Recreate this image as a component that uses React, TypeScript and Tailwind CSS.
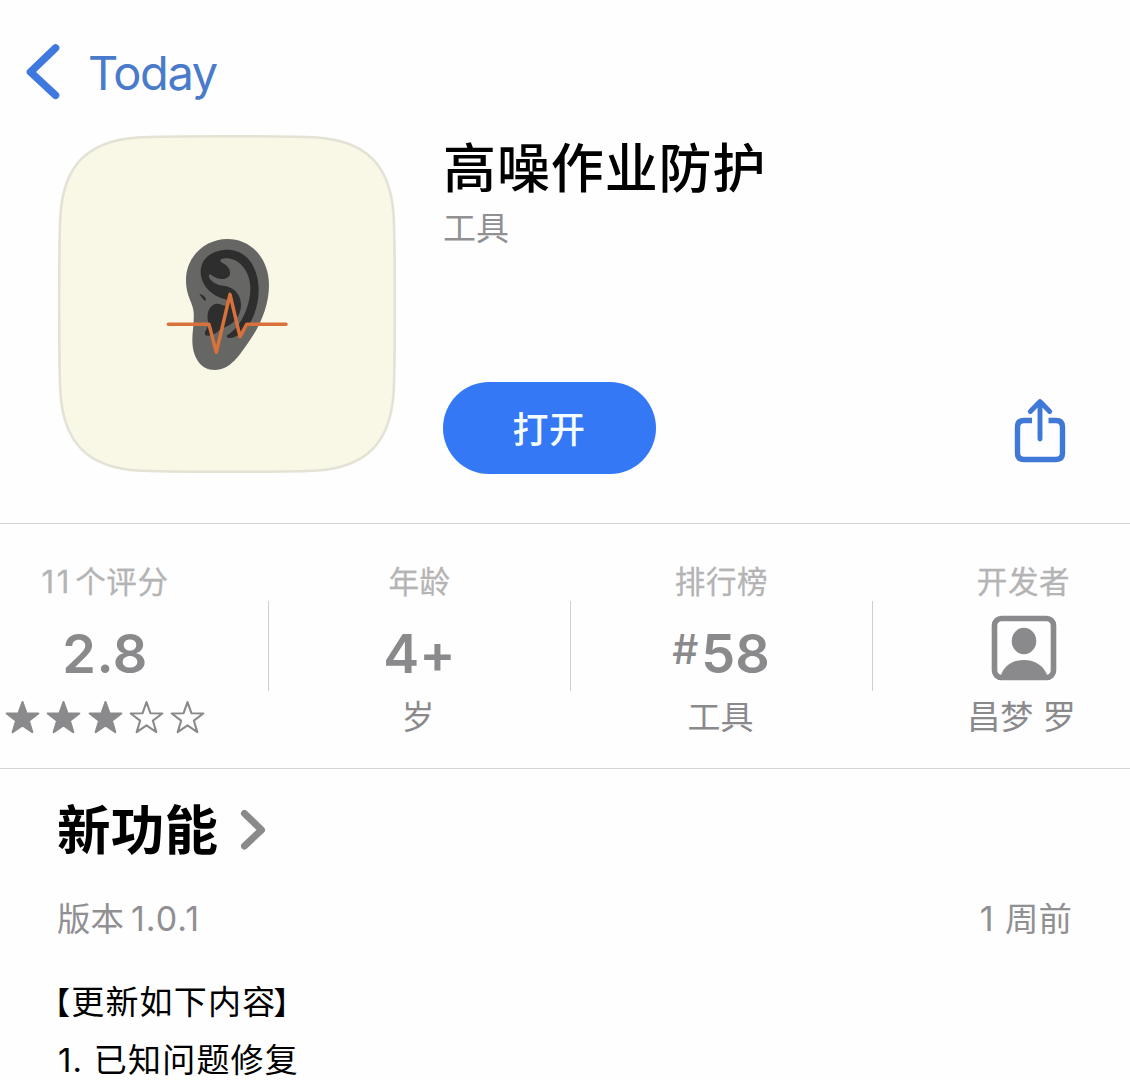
import React from "react";

const GRAY = "#8a8a8d";

function BackChevron() {
  return (
    <svg width="36" height="56" viewBox="0 0 36 56" fill="none" className="shrink-0">
      <path d="M30.500 4 L5.500 28 L30.500 51.300" stroke="#3f78de" strokeWidth="7.600" strokeLinecap="round" strokeLinejoin="round" />
    </svg>
  );
}

function AppIcon() {
  return (
    <svg width="340" height="340" viewBox="0 0 340 340" fill="none" className="shrink-0">
      <path
        d="M80 3.500 C104 1.800 236 1.800 260 3.500 C309 7 333 31 336.500 80 C338.200 104 338.200 236 336.500 260 C333 309 309 333 260 336.500 C236 338.200 104 338.200 80 336.500 C31 333 7 309 3.500 260 C1.800 236 1.800 104 3.500 80 C7 31 31 7 80 3.500Z"
        fill="#f9f7e6"
        stroke="#e3e2d5"
        strokeWidth="2.6"
      />
      <g transform="translate(93 91) scale(.33333)">
        <path d="M232 42 C305 42 357 102 357 180 C357 240 332 300 300 345 C268 392 240 435 195 435 C150 435 127 395 127 345 C127 318 133 295 131 262 C129 232 108 215 108 165 C108 95 165 42 232 42Z" fill="#666664" />
        <path
          d="M232 74 C292 74 326 130 326 195 C326 260 292 332 240 339 C228 341 228 331 236 328 C276 302 301 240 301 190 C301 142 272 103 232 100 C214 99 206 106 214 112 C230 119 242 132 240 147 C236 165 205 168 184 150 C178 146 174 151 178 158 C186 173 203 180 221 182 C254 186 273 210 273 240 C273 276 248 299 220 309 C204 316 190 338 166 331 C160 318 178 308 175 293 C168 268 176 240 200 236 C216 236 222 246 232 240 C240 236 236 228 227 223 C190 214 152 184 152 140 C152 100 188 74 232 74Z"
          fill="#2d2e2d"
        />
        <path d="M148 207 C158 208 168 216 168 226 C163 229 156 219 148 207Z" fill="#2d2e2d" />
        <path d="M55 298 H177 L199 382 L240 208 L270 335 L290 298 H408" stroke="#d9713c" strokeWidth="10.500" strokeLinecap="round" strokeLinejoin="round" />
      </g>
    </svg>
  );
}

function ShareIcon() {
  return (
    <svg width="54" height="66" viewBox="0 0 54 66" fill="none" stroke="#3f78d6" strokeWidth="5.400">
      <path d="M19 22.500 H11 Q4.500 22.500 4.500 29 V55 Q4.500 61.500 11 61.500 H43 Q49.500 61.500 49.500 55 V29 Q49.500 22.500 43 22.500 H35.500" />
      <path d="M27 41 V4 M17.300 13.500 L27 3.500 L36.700 13.500" strokeWidth="4.900" strokeLinecap="round" strokeLinejoin="round" />
    </svg>
  );
}

function Star({ filled }: { filled: boolean }) {
  return (
    <svg width="35" height="35" viewBox="0 0 35 35" className="shrink-0">
      <path
        d="M17.500 2 L21.400 13.200 L33.300 13.500 L23.900 20.700 L27.300 32.100 L17.500 25.300 L7.700 32.100 L11.100 20.700 L1.700 13.500 L13.600 13.200Z"
        fill={filled ? GRAY : "none"}
        stroke={GRAY}
        strokeWidth="2.100"
        strokeLinejoin="round"
      />
    </svg>
  );
}

function PersonIcon() {
  return (
    <svg width="66" height="66" viewBox="0 0 66 66">
      <rect x="3.500" y="3.500" width="59" height="59" rx="7" fill="none" stroke={GRAY} strokeWidth="5.600" />
      <ellipse cx="33" cy="26" rx="12.300" ry="13.200" fill={GRAY} />
      <path d="M9.500 62 C12 51 22 45 33 45 C44 45 54 51 56.500 62Z" fill={GRAY} />
    </svg>
  );
}

function Stat({ label, value, note, className = "" }: { label: React.ReactNode; value: React.ReactNode; note: React.ReactNode; className?: string }) {
  return (
    <div className={"flex flex-col items-center whitespace-nowrap " + className}>
      <div className="flex h-[40px] items-center text-[30.5px] leading-[40px] tracking-[0.6px] text-[#b4b4b5] [-webkit-text-stroke:0.3px_#b4b4b5]">{label}</div>
      <div className="mt-[5px] flex h-[82px] items-center font-['Inter'] text-[54px] font-semibold leading-[82px] text-[#8a8a8d] [font-feature-settings:'calt'_0]">{value}</div>
      <div className="mt-[4px] flex h-[48px] items-center text-[33px] leading-[48px] text-[#8a8a8d]">{note}</div>
    </div>
  );
}

function Divider() {
  return <div className="mt-[39px] h-[90px] w-px shrink-0 bg-[#cfcfd1]" />;
}

export default function App() {
  return (
    <div className="h-[1080px] w-[1130px] overflow-hidden bg-[#fefefe] font-['Inter','Noto_Sans_CJK_SC',sans-serif] text-black">
      <nav className="flex h-[134px] items-start pl-[25px] pt-[44px]">
        <BackChevron />
        <span className="ml-[27px] text-[47px] leading-[57px] tracking-[-1.4px] text-[#4a7bcb]">Today</span>
      </nav>

      <header className="flex h-[389px] pl-[57px]">
        <AppIcon />
        <div className="ml-[46px] flex flex-1 flex-col">
          <h1 className="h-[68px] pt-px text-[53px] font-medium leading-[68px] tracking-[0.9px]">高噪作业防护</h1>
          <p className="mt-[3px] h-[46px] text-[33px] leading-[47px] text-[#909092]">工具</p>
          <div className="mt-[131px] flex items-start justify-between pr-[63px]">
            <button className="flex h-[92px] w-[213px] items-center justify-center rounded-[46px] bg-[#3478f5] pr-px pt-[3px] text-[36px] font-medium tracking-[0.5px] text-[#f5fcff]">打开</button>
            <div className="pt-[16px]">
              <ShareIcon />
            </div>
          </div>
        </div>
      </header>

      <section className="flex h-[246px] border-y-[1.5px] border-[#d5d5d7] pt-[38px]">
        <Stat
          className="w-[268px] pr-[58px]"
          label={<span><span className="text-[31px] tracking-[2.8px]">11</span><span className="ml-[3px]">个评分</span></span>}
          value={<span className="pt-[11px] tracking-[0.5px]">2.8</span>}
          note={
            <div className="flex gap-[6.3px]">
              {[1, 2, 3, 4, 5].map((n) => (
                <Star key={n} filled={n <= 3} />
              ))}
            </div>
          }
        />
        <Divider />
        <Stat className="w-[301px]" label="年龄" value={<span className="pt-[11px]">4+</span>} note={<span className="pr-[3px]">岁</span>} />
        <Divider />
        <Stat
          className="w-[301px]"
          label="排行榜"
          value={
            <span className="flex items-center pr-px pt-[11px]">
              <span className="mr-[3px] mt-[-9px] text-[41px] font-medium">#</span>58
            </span>
          }
          note={<span className="pr-[2px]">工具</span>}
        />
        <Divider />
        <Stat className="flex-1 pl-[44px]" label="开发者" value={<PersonIcon />} note={<span className="pr-[4px]">昌梦 罗</span>} />
      </section>

      <section className="px-[57px] pt-[22px]">
        <div className="flex h-[80px] items-center">
          <h2 className="text-[53.5px] font-bold leading-[80px] tracking-[0.3px]">新功能</h2>
          <svg width="26" height="42" viewBox="0 0 26 42" fill="none" className="ml-[22px]">
            <path d="M4.500 3.500 L21.500 20 L4.500 36" stroke={GRAY} strokeWidth="7" strokeLinecap="round" strokeLinejoin="round" />
          </svg>
        </div>
        <div className="mt-[23px] flex h-[50px] items-center justify-between text-[33.5px] leading-[50px] text-[#909092]">
          <span>版本<span className="ml-[7px] text-[34px] tracking-[1px]">1.0.1</span></span>
          <span className="pr-px"><span className="mr-[2px] text-[34px]">1</span> 周前</span>
        </div>
        <div className="mt-[30px] whitespace-nowrap text-[33px] leading-[56.500px] tracking-[1.2px]">
          <p className="ml-[-18px]"><span className="text-[31px]">【</span>更新如下内容<span className="ml-[-3px] text-[31px]">】</span></p>
          <p className="pl-px">1. 已知问题修复</p>
        </div>
      </section>
    </div>
  );
}
